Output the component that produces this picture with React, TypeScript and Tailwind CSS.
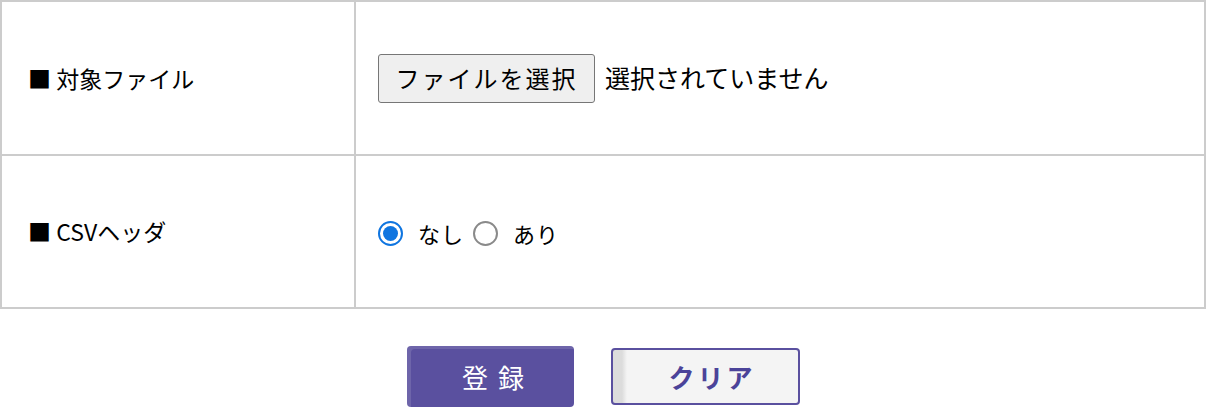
import React, { useState } from 'react';

const font = { fontFamily: '"Noto Sans CJK JP", "Noto Sans", sans-serif' };

const Radio: React.FC<{ checked: boolean; onClick: () => void }> = ({ checked, onClick }) => (
  <span
    onClick={onClick}
    className={`flex h-[25px] w-[25px] shrink-0 cursor-pointer items-center justify-center rounded-full bg-white ${
      checked ? 'border-[2px] border-[#0f75e0]' : 'border-[2px] border-[#8a8a8a]'
    }`}
  >
    {checked && <span className="h-[15px] w-[15px] rounded-full bg-[#0f75e0]" />}
  </span>
);

const App: React.FC = () => {
  const [header, setHeader] = useState<'none' | 'yes'>('none');

  return (
    <div className="h-[408px] w-[1206px] bg-white text-black" style={font}>
      {/* form table */}
      <div className="border-2 border-[#cccccc]">
        <div className="flex h-[154px] border-b-2 border-[#cccccc]">
          <div className="flex w-[354px] items-center border-r-2 border-[#cccccc] pl-[26px] text-[23px]">
            <span>■ 対象ファイル</span>
          </div>
          <div className="flex flex-1 items-center pl-[22px]">
            <span className="flex h-[49px] w-[217px] items-center justify-center rounded-[3px] border border-[#767676] bg-[#efefef] text-[24px] tracking-[2px]">
              ファイルを選択
            </span>
            <span className="ml-[10px] text-[25px]">選択されていません</span>
          </div>
        </div>
        <div className="flex h-[151px]">
          <div className="flex w-[354px] items-center border-r-2 border-[#cccccc] pl-[26px] text-[23px]">
            <span>■ CSVヘッダ</span>
          </div>
          <div className="flex flex-1 items-center pl-[22px] pt-[3px] text-[22px]">
            <Radio checked={header === 'none'} onClick={() => setHeader('none')} />
            <span className="ml-[15px] tracking-[1px]">なし</span>
            <span className="ml-[9px]">
              <Radio checked={header === 'yes'} onClick={() => setHeader('yes')} />
            </span>
            <span className="ml-[15px] tracking-[1px]">あり</span>
          </div>
        </div>
      </div>

      {/* actions */}
      <div className="mt-[37px] flex items-center justify-center gap-[37px]">
        <button className="h-[61px] w-[167px] rounded-[4px] bg-[#5a509f] pl-[16px] text-[26px] tracking-[10px] text-white shadow-[inset_4px_3px_0_rgba(255,255,255,0.12)]">
          登録
        </button>
        <button className="h-[57px] w-[189px] rounded-[4px] border-2 border-[#5a509f] bg-[linear-gradient(to_right,#dcdcdc_0px,#dcdcdc_9px,#f4f4f4_14px,#f4f4f4_100%)] pl-[14px] text-[26px] font-bold tracking-[3px] text-[#4b4399]">
          クリア
        </button>
      </div>
    </div>
  );
};

export default App;
